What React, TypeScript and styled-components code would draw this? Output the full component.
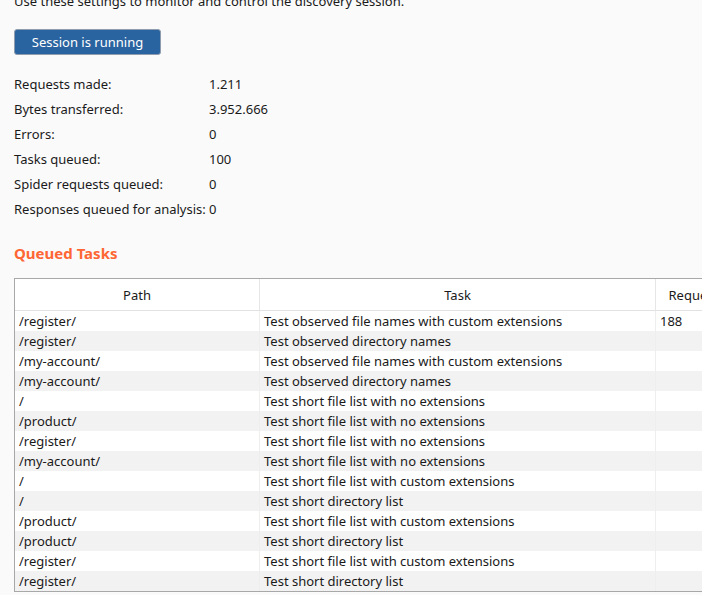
import React from "react";
import styled, { createGlobalStyle } from "styled-components";

const Global = createGlobalStyle`
  html, body {
    margin: 0;
    padding: 0;
    background: #fafafa;
    overflow: hidden;
  }
  body {
    width: 702px;
    height: 595px;
    font-family: "Noto Sans", "Open Sans", sans-serif;
    font-size: 13px;
    color: #1a1a1a;
  }
`;

const Page = styled.div`
  width: 702px;
  height: 595px;
  overflow: hidden;
  padding: 0 0 0 14px;
  box-sizing: border-box;
  display: flex;
  flex-direction: column;
`;

const Intro = styled.p`
  margin: -8px 0 0 0;
  line-height: 18px;
  white-space: nowrap;
`;

const RunButton = styled.button`
  margin-top: 19px;
  align-self: flex-start;
  width: 147px;
  height: 26px;
  background: #2a64a0;
  color: #ffffff;
  border: 1px solid #8e9cad;
  border-radius: 3px;
  font-family: inherit;
  font-size: 13px;
  padding: 0;
  line-height: 22px;
`;

const Stats = styled.div`
  margin-top: 16px;
  display: grid;
  grid-template-columns: 195px auto;
  grid-auto-rows: 25px;
  align-items: center;
  line-height: 18px;
`;

const Heading = styled.h2`
  margin: 22px 0 0 0;
  font-size: 15px;
  font-weight: 700;
  color: #ff6633;
  line-height: 20px;
`;

const TableWrap = styled.div`
  margin-top: 15px;
  width: 720px;
  border: 1px solid #a8a8a8;
  border-right: none;
  background: #ffffff;
`;

const Table = styled.table`
  border-collapse: collapse;
  table-layout: fixed;
  width: 720px;
`;

const Th = styled.th<{ $w: number }>`
  width: ${(p) => p.$w}px;
  height: 31px;
  font-weight: 400;
  text-align: center;
  padding: 0;
  border-bottom: 1px solid #e2e2e2;
  border-left: 1px solid #e6e6e6;
  white-space: nowrap;
  overflow: hidden;
  &:first-child {
    border-left: none;
  }
`;

const Tr = styled.tr<{ $alt: boolean }>`
  background: ${(p) => (p.$alt ? "#f2f2f2" : "#ffffff")};
`;

const Td = styled.td`
  height: 20px;
  padding: 0 0 0 4px;
  line-height: 18px;
  white-space: nowrap;
  overflow: hidden;
  border-left: 1px solid #eeeeee;
  &:first-child {
    border-left: none;
  }
`;

const stats: [string, string][] = [
  ["Requests made:", "1.211"],
  ["Bytes transferred:", "3.952.666"],
  ["Errors:", "0"],
  ["Tasks queued:", "100"],
  ["Spider requests queued:", "0"],
  ["Responses queued for analysis:", "0"],
];

const rows: [string, string, string][] = [
  ["/register/", "Test observed file names with custom extensions", "188"],
  ["/register/", "Test observed directory names", ""],
  ["/my-account/", "Test observed file names with custom extensions", ""],
  ["/my-account/", "Test observed directory names", ""],
  ["/", "Test short file list with no extensions", ""],
  ["/product/", "Test short file list with no extensions", ""],
  ["/register/", "Test short file list with no extensions", ""],
  ["/my-account/", "Test short file list with no extensions", ""],
  ["/", "Test short file list with custom extensions", ""],
  ["/", "Test short directory list", ""],
  ["/product/", "Test short file list with custom extensions", ""],
  ["/product/", "Test short directory list", ""],
  ["/register/", "Test short file list with custom extensions", ""],
  ["/register/", "Test short directory list", ""],
];

export default function App() {
  return (
    <>
      <Global />
      <Page>
        <Intro>Use these settings to monitor and control the discovery session.</Intro>
        <RunButton>Session is running</RunButton>
        <Stats>
          {stats.map(([k, v]) => (
            <React.Fragment key={k}>
              <span>{k}</span>
              <span>{v}</span>
            </React.Fragment>
          ))}
        </Stats>
        <Heading>Queued Tasks</Heading>
        <TableWrap>
          <Table>
            <thead>
              <tr>
                <Th $w={244}>Path</Th>
                <Th $w={395}>Task</Th>
                <Th $w={81}>Requests</Th>
              </tr>
            </thead>
            <tbody>
              {rows.map((r, i) => (
                <Tr key={i} $alt={i % 2 === 1}>
                  <Td>{r[0]}</Td>
                  <Td>{r[1]}</Td>
                  <Td>{r[2]}</Td>
                </Tr>
              ))}
            </tbody>
          </Table>
        </TableWrap>
      </Page>
    </>
  );
}
